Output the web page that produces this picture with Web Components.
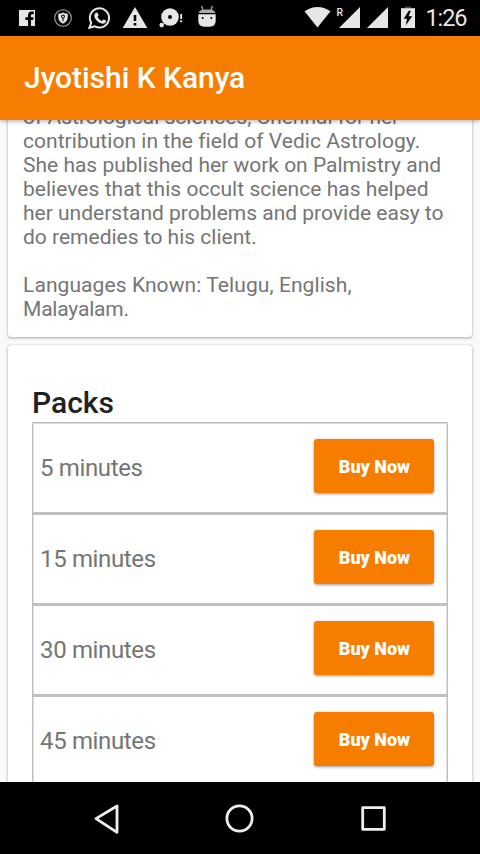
<!DOCTYPE html>
<html lang="en"><head><meta charset="utf-8"><title>Jyotishi K Kanya</title>
<style>body{margin:0;overflow:hidden;font-family:Roboto,"Noto Sans",sans-serif}</style></head>
<body><astro-screen></astro-screen>
<script>
function define(name, html){
  const t=document.createElement('template');t.innerHTML=html;
  customElements.define(name,class extends HTMLElement{
    constructor(){super();this.attachShadow({mode:'open'}).append(t.content.cloneNode(true));}
  });
}
define('status-bar',`<style>
:host{display:block;height:36px;flex:none;background:#000}
svg{display:block}
text{font:23.5px Roboto,sans-serif;fill:#e6e6e6}
</style>
<svg width="480" height="36" viewBox="0 0 480 36" fill="#e6e6e6">
<path d="M19 10H35V26H31V20H33.2L33.6 17.2H31V15.5Q31 14.3 32.2 14.3H33.8V11.5H31.3Q28 11.5 28 15.1V17.2H25.4V20H28V26H19Z"/>
<circle cx="63" cy="18" r="8.3" fill="none" stroke="#aaa" stroke-width="1.1"/>
<path d="M58.3 13.6Q61 13.6 63 12.4Q65 13.6 67.7 13.6V17.5Q67.5 21.5 63 23.8Q58.5 21.5 58.3 17.5Z"/>
<circle cx="63" cy="16.6" r="1.5" fill="none" stroke="#222" stroke-width="1.1"/><path d="M62.4 18H63.6V21.3H62.4Z" fill="#222"/>
<path d="M91.2 22.8A9.6 9.6 0 1 1 94.8 26.3L89.4 27.8Z" fill="none" stroke="#e6e6e6" stroke-width="2"/>
<path d="M95.6 12.8L97 12.5Q97.5 12.5 97.8 13.2L98.6 15.2Q98.7 15.7 97.4 17Q99.3 20.2 102 21.1L103.4 19.5Q103.8 19.3 106.1 20.7Q106 23.3 102.9 23.7Q98.6 23.2 95.6 19.2Q93 15.7 95.6 12.8Z"/>
<path d="M135 7L147.3 28H122.7Z"/><path d="M133.7 15H136.3V21H133.7ZM133.7 23H136.3V25.4H133.7Z" fill="#000"/>
<circle cx="170" cy="17" r="8.8"/><circle cx="170" cy="17" r="2" fill="#000"/><circle cx="161.7" cy="25.1" r="2.3"/>
<path d="M180.2 14H182.1V19H180.2ZM180.2 20.3H182.1V22.2H180.2Z"/>
<path d="M198.3 14.3H215.7V21Q215.7 26.7 209.5 26.7H204.5Q198.3 26.7 198.3 21Z"/>
<path d="M198.6 13Q199.5 9.5 204.5 9.5H209.5Q214.5 9.5 215.4 13Z" fill="#aaa"/>
<path d="M201.5 6L203 10M212.5 6L211 10" stroke="#aaa" stroke-width="1.3"/><circle cx="202.7" cy="18" r="1" fill="#000"/><circle cx="211.3" cy="18" r="1" fill="#000"/>
<path d="M304.5 11.3Q317.5 2.7 330.5 11.3L317.5 27.5Z"/>
<text x="336.5" y="16.3" style="font-size:11.5px;font-weight:500" textLength="6.5" lengthAdjust="spacingAndGlyphs">R</text>
<path d="M360 7V28H339Z"/><path d="M388 7V28H367Z"/>
<path d="M405 6.3H411V8H405Z" fill="#444"/><path d="M401 8.2H415V28H401Z"/>
<path d="M408.8 10.7L403.7 18.7H407L405.8 25.2L412.3 16.3H408.6L410.8 10.7Z" fill="#000"/>
<text x="425.5" y="26" textLength="42">1:26</text>
</svg>`);
define('app-bar',`<style>
:host{display:flex;height:84px;flex:none;align-items:center;box-sizing:border-box;padding-left:24px;background:#f77d00;color:#fff;font-size:30px;font-weight:500;line-height:36px;letter-spacing:-.04px;box-shadow:0 1px 5px #0005;z-index:1}
</style><slot></slot>`);
define('content-card',`<style>
:host{display:block;box-sizing:border-box;background:#fff;border-radius:3px;box-shadow:0 1px 3px #0005,0 0 1px #0003}
</style><slot></slot>`);
define('bio-text',`<style>
:host{display:block;padding:0 15px 16px;font-size:21px;line-height:24px;color:#757575;white-space:nowrap}
::slotted(span){display:block;min-height:24px}
</style><slot></slot>`);
define('buy-button',`<style>
:host{display:block}
button{display:block;width:120px;height:54px;border:0;border-radius:3px;background:#f77d00;color:#fff;font:900 18px Roboto,sans-serif;padding:0 0 0 1px;box-shadow:0 1px 3px #0006}
</style><button>Buy Now</button>`);
define('pack-row',`<style>
:host{display:flex;justify-content:space-between;align-items:center;box-sizing:border-box;height:91px;padding:0 13px 4px 7px;border:solid #c0c0c0;border-width:0 1px 3px;box-shadow:inset 1px 0 #dedede,inset -1px 0 #dedede;font-size:24px;color:#757575}
span{padding-top:3px;letter-spacing:-.35px}
</style><span><slot></slot></span><buy-button></buy-button>`);
define('pack-list',`<style>
:host{display:block;padding:40px 24px 0}
h2{margin:0;font-size:30px;font-weight:500;line-height:36px;color:#212121}
div{border-top:1px solid #b8b8b8;margin-top:1px;padding-top:1px;background:linear-gradient(#dedede,#dedede) 0 0/100% 1px no-repeat}
</style><h2>Packs</h2><div><slot></slot></div>`);
define('nav-bar',`<style>
:host{display:block;height:72px;flex:none;background:#000}svg{display:block}
</style><svg width="480" height="72" fill="none" stroke="#eee" stroke-width="2.8" stroke-linejoin="round"><path d="M117 24V50.3L96 36.6Z"/><circle cx="239.5" cy="36.5" r="12.6"/><path d="M362.7 25.7H384.3V47.3H362.7Z"/></svg>`);
define('astro-screen',`<style>
:host{display:flex;flex-direction:column;width:480px;height:854px;background:#fafafa}
main{flex:1;min-height:0;overflow:hidden;display:flex;flex-direction:column;gap:8px;padding:0 8px}
content-card{flex:none}
.bio{margin-top:-15px}
.packs{height:480px}
</style>
<status-bar></status-bar><app-bar>Jyotishi K Kanya</app-bar>
<main>
<content-card class="bio"><bio-text><span>of Astrological sciences, Chennai for her</span><span style="letter-spacing:.04px">contribution in the field of Vedic Astrology.</span><span>She has published her work on Palmistry and</span><span style="letter-spacing:.03px">believes that this occult science has helped</span><span>her understand problems and provide easy to</span><span>do remedies to his client.</span><span></span><span style="letter-spacing:.08px">Languages Known: Telugu, English,</span><span style="letter-spacing:-.2px">Malayalam.</span></bio-text></content-card>
<content-card class="packs"><pack-list><pack-row>5 minutes</pack-row><pack-row>15 minutes</pack-row><pack-row>30 minutes</pack-row><pack-row>45 minutes</pack-row></pack-list></content-card>
</main><nav-bar></nav-bar>`);
</script></body></html>
